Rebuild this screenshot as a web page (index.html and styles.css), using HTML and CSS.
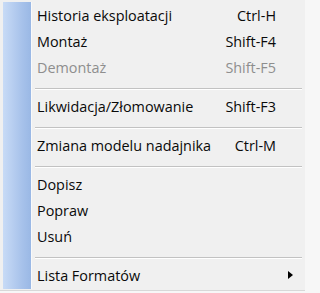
FILE: index.html
```html
<!DOCTYPE html>
<html lang="pl">
<head>
<meta charset="utf-8">
<title>Menu</title>
<link rel="stylesheet" href="styles.css">
</head>
<body>
<div class="menu">
  <div class="item"><span class="label">Historia eksploatacji</span><span class="key">Ctrl-H</span></div>
  <div class="item"><span class="label">Montaż</span><span class="key">Shift-F4</span></div>
  <div class="item disabled"><span class="label">Demontaż</span><span class="key">Shift-F5</span></div>
  <div class="sep"></div>
  <div class="item"><span class="label">Likwidacja/Złomowanie</span><span class="key">Shift-F3</span></div>
  <div class="sep"></div>
  <div class="item"><span class="label">Zmiana modelu nadajnika</span><span class="key">Ctrl-M</span></div>
  <div class="sep"></div>
  <div class="item"><span class="label">Dopisz</span></div>
  <div class="item"><span class="label">Popraw</span></div>
  <div class="item"><span class="label">Usuń</span></div>
  <div class="sep"></div>
  <div class="item submenu"><span class="label">Lista Formatów</span><span class="arrow"></span></div>
</div>
</body>
</html>
```
FILE: styles.css
```css
html, body {
  margin: 0;
  padding: 0;
}
body {
  background: #f7f7f7;
  width: 305px;
  height: 293px;
  overflow: hidden;
  font-family: "Open Sans", "Noto Sans", "Liberation Sans", sans-serif;
  font-size: 14.4px;
  color: #0a0a0a;
}
.menu {
  box-sizing: border-box;
  width: 305px;
  height: 291px;
  padding-top: 2px;
  border-bottom: 1px solid #d8d8d8;
  background:
    linear-gradient(#f9f9f9, #f9f9f9) no-repeat 31px 2px / 1px 287px,
    linear-gradient(to right, #c8dbf6, #a6c1ea 70%, #9ab8e5) no-repeat 3px 2px / 28px 287px,
    #f0f0f0;
}
.item {
  height: 26px;
  display: flex;
  align-items: center;
  justify-content: space-between;
  padding-left: 37px;
  padding-right: 29px;
  white-space: nowrap;
}
.item.disabled {
  color: #8e8e8e;
}
.item.submenu {
  padding-right: 12px;
}
.arrow {
  width: 0;
  height: 0;
  border-left: 5px solid #000;
  border-top: 4px solid transparent;
  border-bottom: 4px solid transparent;
}
.sep {
  height: 13px;
  box-sizing: border-box;
  padding-top: 8px;
  margin-left: 35px;
  margin-right: 3px;
}
.sep::before {
  content: "";
  display: block;
  height: 1px;
  background: #c2c2c2;
  border-bottom: 1px solid #ffffff;
}
```
